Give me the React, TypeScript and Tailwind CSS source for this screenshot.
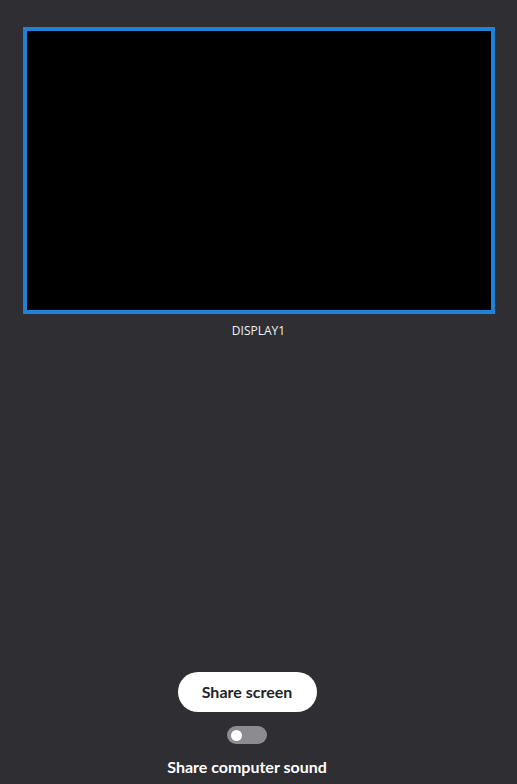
import { useState } from 'react'

export default function App() {
  const [shareSound, setShareSound] = useState(false)

  return (
    <div
      className="flex h-[784px] w-[517px] flex-col items-center bg-[#2e2e33] text-white"
      style={{ fontFamily: '"Open Sans", "Noto Sans", sans-serif' }}
    >
      {/* selected display preview */}
      <div className="mt-[27px] flex flex-col items-center">
        <div className="h-[287px] w-[472px] border-4 border-[#1f82d6] bg-black" />
        <span className="mt-[9px] text-[12px] leading-[16px] text-[#f2f2f2]">DISPLAY1</span>
      </div>

      <div className="flex-1" />

      <div
        className="mb-[7px] mr-[23px] flex flex-col items-center"
        style={{ fontFamily: 'Lato, "Open Sans", sans-serif' }}
      >
        <button className="h-[40px] w-[139px] rounded-full bg-white text-[16px] font-bold text-[#232328]">
          Share screen
        </button>
        <button
          onClick={() => setShareSound(!shareSound)}
          className="mt-[14px] flex h-[18px] w-[40px] items-center rounded-full bg-[#8b8b90] px-[4px]"
        >
          <span className="h-[11px] w-[11px] rounded-full bg-white" />
        </button>
        <span className="mt-[13px] text-[16px] font-bold leading-[20px]">Share computer sound</span>
      </div>
    </div>
  )
}
